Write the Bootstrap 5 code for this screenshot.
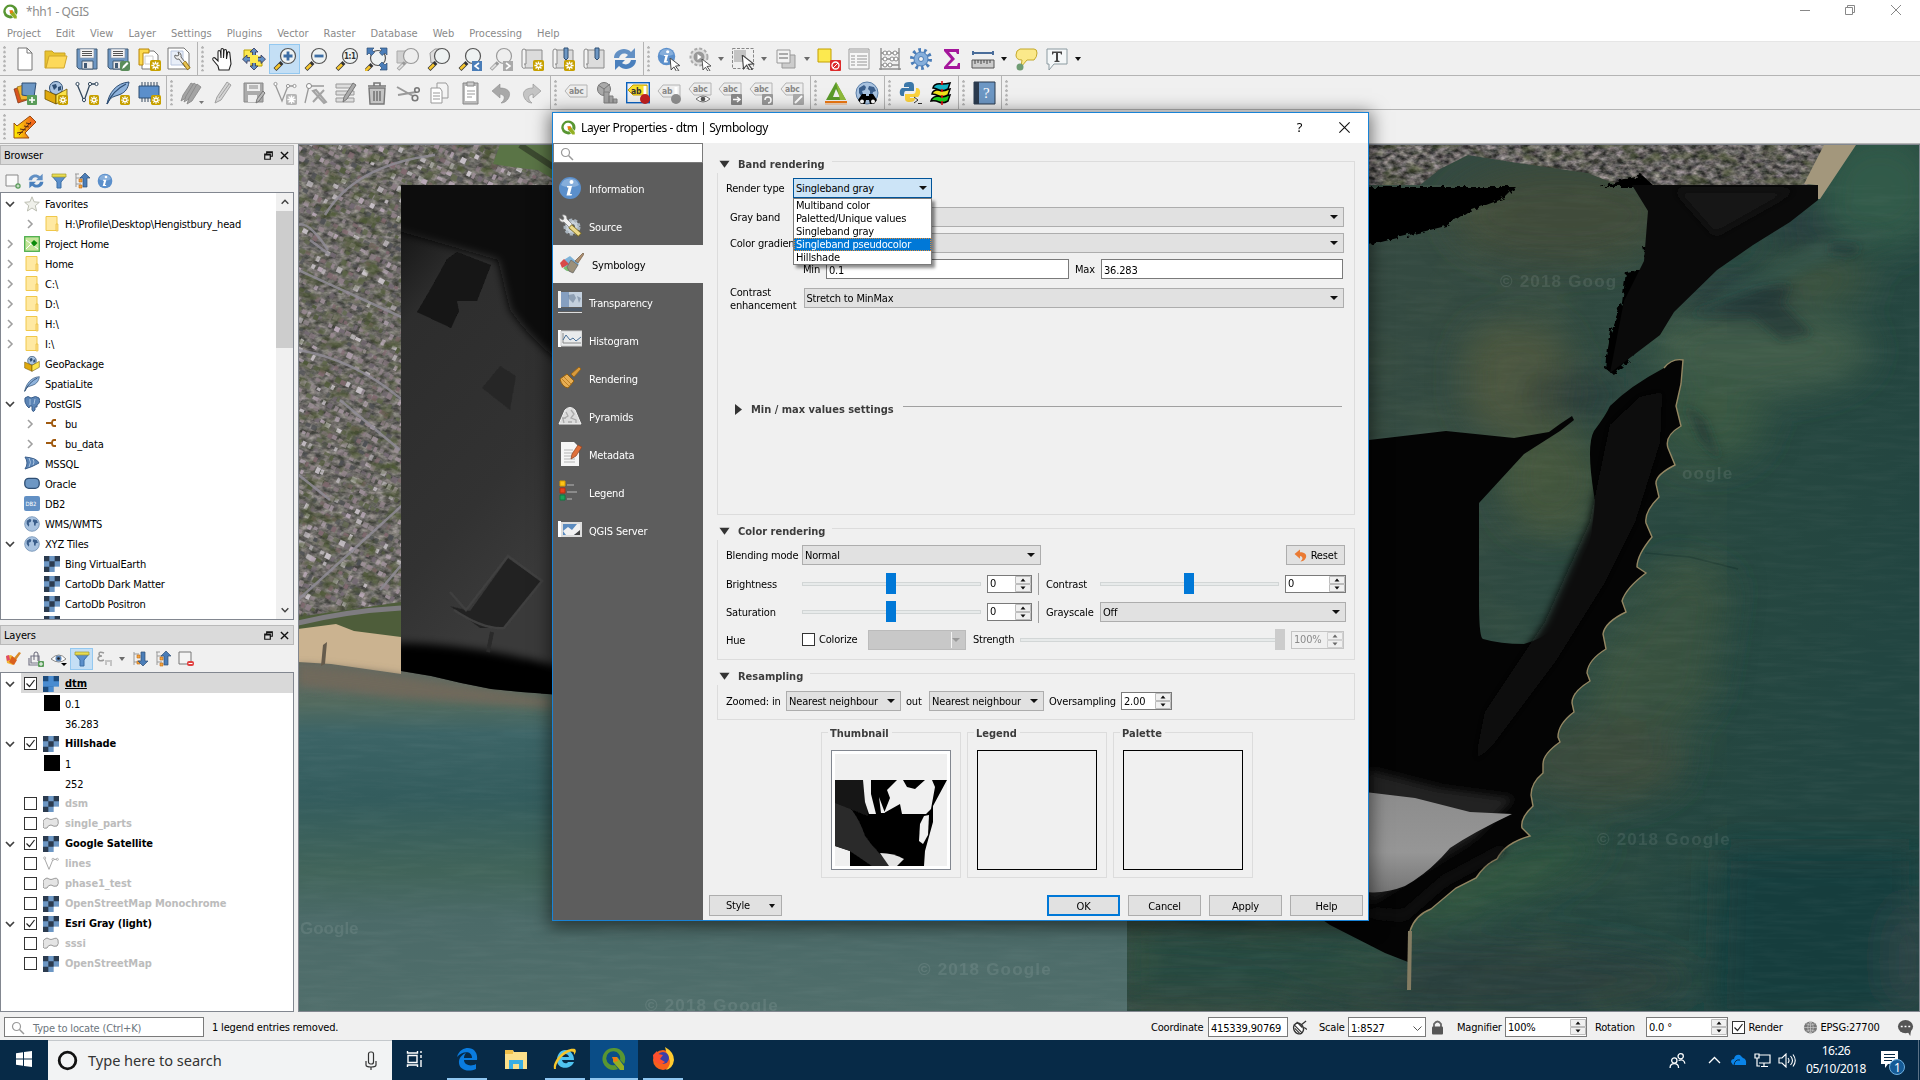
<!DOCTYPE html>
<html lang="en">
<head>
<meta charset="utf-8">
<title>*hh1 - QGIS</title>
<link rel="stylesheet" href="https://cdn.jsdelivr.net/npm/bootstrap@5.3.0/dist/css/bootstrap.min.css">
<style>
html,body{width:1920px;height:1080px;overflow:hidden}
body{font:11px/13px "DejaVu Sans Condensed","DejaVu Sans",sans-serif;font-stretch:condensed;letter-spacing:-.18px;color:#000;background:#f0f0f0;white-space:nowrap}
svg{display:block;flex:none}
.seg{font-family:"Noto Sans","Open Sans",sans-serif;font-stretch:normal;letter-spacing:-.4px}
.titlebar{height:22px;background:#fff;color:#8c8c8c;font-size:12px;padding-left:3px}
.winbtns{width:138px;margin-top:-2px}
.winbtns span{width:45.5px}
.menubar{height:20px;background:#fff;color:#8a8a8a;padding:3px 0 0 7px;gap:15px;letter-spacing:0;border-bottom:1px solid #e6e6e6}
.tbrow{height:34px;border-bottom:1px solid #b4b4b4}
.tgroup{border-right:1px solid #b4b4b4}
.grip{width:9.5px;height:26px;background:radial-gradient(circle at 1.5px 1.5px,#b4b4b4 1.1px,transparent 1.5px) 3px 0/4px 4.6px;clip-path:inset(0 2.5px 0 3px)}
.tb{width:30.9px;height:30px;display:flex;align-items:center;justify-content:center}
.tb svg{width:24px;height:24px}
.tb.lit{background:#c4dff5;border:1px solid #93c8f0}
.tarr{width:12px;display:flex;justify-content:center}
.tarr:after{content:"";border:3.5px solid transparent;border-top:4px solid #6b6b6b;border-bottom:0}
.tarr.blk:after{border-top-color:#111}
.g1{width:198px}.g2{width:446px}.r2a{width:167px}.r2b{width:384px}.r2c{width:260px}.r2d{width:74px}.r2e{width:74px}.r2f{width:43px}
.dockcol{width:298px;height:868px;padding-top:1px}
.dtitle{width:294px;height:20px;background:#dadada;border:1px solid #b9b9b9;padding:1px 4px 0 3px;gap:7px}
.dgap{margin-top:5px}
.dtools{height:27px;padding-left:1px}
.dtools span{width:23px;height:22px;display:flex;align-items:center;justify-content:center}
.dtools svg{width:16px;height:16px}
.dtools .lit{background:#c4dff5;border:1px solid #93c8f0}
.treebox{width:294px;background:#fff;border:1px solid #828790;overflow:hidden}
#browserTree{height:428px}
#browserRows{padding-top:1px}
.trow{height:20px;padding-left:3px}
.trow .chev{width:20px;flex:none}
.trow .ico{width:16px;height:16px;margin-right:5px}
.lv2{padding-left:23px}
.sbar{width:17px;background:#f0f0f0}
.sthumb{height:137px;background:#cdcdcd}
.lrow{height:20px;padding:1px 0 0 3px;font-weight:700;letter-spacing:-.08px}
.lrow.off{color:#bcbcbc}
.lrow .chev{width:16px}
.lrow .ico{width:16px;height:16px;margin:0 6px 0 6px}
.lrow.hl{background:linear-gradient(#d9d9d9,#d9d9d9) 20px 0 no-repeat}
.cbx{width:13px;height:13px;border:1px solid #333;background:#fff;display:inline-flex;align-items:center;justify-content:center;flex:none}
.cbx svg{width:11px;height:11px}
.sub{height:20px;padding:2px 0 0 43px}
.sub i{width:16px;height:16px;background:#000;margin-right:5px;margin-top:-3px}
.sub .blank{background:#fff}
.mapbox{width:1622px;height:868px;overflow:hidden;border:1px solid #828790}
.stat{height:28px;padding-top:2px}
.fld{background:#fff;border:1px solid #7a7a7a;height:20px;padding:2px 2px 0;display:flex;align-items:center;flex:none}
.cmb{background:#e1e1e1;border:1px solid #adadad;height:20px;padding:1px 5px 0 2px;display:flex;align-items:center;justify-content:space-between;flex:none}
.cmb:after{content:"";border:4px solid transparent;border-top:4.5px solid #111;border-bottom:0;margin-top:-1px}
.spn{background:#fff;border:1px solid #7a7a7a;height:18px;padding:0 0 0 2px;display:flex;align-items:center;justify-content:space-between;flex:none}
.spn svg{width:16px;height:16px}
.spn.dis{background:#f0f0f0;border-color:#c4c4c4;color:#8a8a8a}
.spn.dis svg{opacity:.6}
#locate{width:200px;margin-left:4px}
.s1,.s4,.s7,.s9,.s11,.s13{flex:none}
#statR{width:769px}.s1{width:57px}.s2{width:80px;margin-right:4px}.s3{margin-right:12px}.s4{width:29px}.s5{width:78px;margin-right:5px}.s6{margin-right:13px}.s7{width:48px}.s8{width:81.5px;height:20px}.s9{width:51px;margin-left:8.5px}.s10{margin:0 4px 0 4px}.s11{width:54px}.s12{margin-right:3px}.s13{width:76px}
.task{height:40px;background:#072a47;color:#fff}
.tkbtn{height:40px;display:flex;align-items:center;justify-content:center;flex:none;border-bottom:2px solid transparent}
.tkbtn.on{border-bottom-color:#8fc6f0}
.tkbtn svg{width:24px;height:24px}
.search{width:344px;height:40px;background:#f2f3f4;border-top:1px solid #c4c8cc;color:#333;font-size:14.6px;letter-spacing:-.03px;padding:0 14px 0 9px;gap:10px}
.t48{width:48px}.t46{width:46px}.t40{width:40px}.t58{width:58px}.qg{margin-left:5px;background:#0a4d87}.ffx{margin-left:5px}.edg{margin-left:9px}
#winlogo{width:16px;height:16px}
.tray{width:251px}.y1{margin-left:22px}.y2{margin-left:9px}.y3{margin-left:7px}.clock{width:64px;margin-left:8px;font-size:12px;line-height:18px}.y4{margin-left:12px;margin-top:4px}.peek{width:1px;height:40px;background:#5a7186;margin-left:12px}
.dlg{left:552px;top:112px;width:817px;height:809px;border:1px solid #1883d7;background:#f0f0f0;box-shadow:0 3px 16px 3px rgba(0,0,0,.5)}
.dlgtitle{height:30px;background:#fff;font-size:12px;padding:0 0 1px 8px}
.dlgtitle .me-auto{margin-left:5px}
#qm{margin-right:37px;font-size:13px}#dx{margin-right:18px}
#sfind{width:150px;margin-bottom:6px}
.side{width:150px;height:777px;background:#5d5d5d;color:#fff}
.sitem{height:38px;padding:2px 0 0 5px;gap:7px}
.sitem.sel{background:#f0f0f0;color:#000;gap:8px;padding-left:7px}
.sitem svg{width:24px;height:24px;margin-top:-2px}
.ghead{height:18px;font-weight:700;color:#3c3c3c;padding-left:2px}
.ghead,.mm,.thg b{letter-spacing:0}
.ghead:after{content:"";flex:1;align-self:flex-end;height:12px;margin-left:7px;border:solid #dcdcdc;border-width:1px 1px 0 0}
.gbody{border:solid #dcdcdc;border-width:0 1px 1px 1px;padding:5px 10px 0 8px}
.tri{width:11px;height:8px;margin-right:8px}
.pane{padding:12px 13px 0 14px;width:665px;height:777px}
.popup{left:-1px;top:19px;width:139px;height:67px;background:#fff;border:1px solid #7a7a7a;box-shadow:3px 3px 3px rgba(0,0,0,.45);z-index:3}
.popup div{height:13px;padding-left:2.5px}
.popup .pick{background:#0078d7;color:#fff;outline:1px dotted #e88b2e;outline-offset:-1px}
.sld{height:21px;position:relative;flex:none;display:flex;align-items:center}
.sld:before{content:"";width:100%;height:4px;background:#e7eaea;border:1px solid #d2d6d6}
.sld i{position:absolute;width:10px;height:21px;left:84px;background:#0078d7}
.sld.dis i{background:#ccc;left:auto;right:0}
.vline{width:1px;height:22px;background:#a0a0a0;flex:none}
.l68{width:66.5px}.l76{width:76px}.l24{width:23px}.l74{width:73.5px}.l54{width:54px;margin-left:7px}.l60{width:60px}
.l74,.l76,.l68,.l24,.l60,.l54{flex:none;padding-top:1px}
.w139{width:139px}.w540{width:540px}.w243{width:243px}.w242{width:242px}.w239{width:239px}.w179{width:179px}.w45{width:45px}.w61{width:61px}.w246{width:246px}.w265{width:265px}.w52{width:53px}.w115{width:115px}.w51{width:51px}
#gb1{height:342px}#gb2{height:120px}#gb3{height:35px;padding-top:6px}
#mmrow{padding-left:77px}#mx{width:32px;padding-left:6px}
.gh2,.gh3{margin-top:7px}
#reset{width:59px;height:20px;margin-right:-1px}
.r28{height:22px;margin-top:6px}
#gb2 .r28:nth-child(2){margin-top:7.5px}
.sp6,.vl6{margin-left:6px}
.colz{width:51px;margin-left:4px}.clr{width:98px;background:#c8c8c8;border-color:#bbb;margin-left:1px}.clr:after{border-top-color:#999}.clr span{width:82px;height:16px;border-right:1px solid #f4f4f4}.str{width:50px;margin-left:7px}
.lout{width:28px;padding-left:5px}.lovs{width:77px;padding-left:5px}
.r9{margin-top:9px}.r6{margin-top:6px}.h20{height:20px}
.ren{padding:1px 4px 0 2.5px;background:#cce4f7;border-color:#005499;position:relative}
.ind{padding-left:4px}
.mm{margin-top:92px;padding-left:9px;height:18px;font-weight:700;color:#3c3c3c;gap:9px}
.mm:after{content:"";flex:1;height:1px;background:#a0a0a0;margin:-5px 2px 0 0}
.thumbs{gap:6px;margin:12px 0 0 104px}#tn{border-color:#828790}
.thg{width:140px;height:146px;border:1px solid #dcdcdc}
.thg b{margin:-6px 0 0 6px;background:#f0f0f0;padding:0 3px 0 2px;color:#3c3c3c;display:table}
.thb{width:120px;height:120px;border:1px solid #000;margin:10px 0 0 9px}
.dbtn{width:73px;height:21px;border:1px solid #adadad;background:#e1e1e1;display:flex;align-items:center;justify-content:center;padding-top:1px}
.dbtn.def{border:2px solid #0078d7}
.foot{gap:8px;margin:17px -8px 0 -8px}#sty{padding:0 3px 0 16px}
</style>
<script src="https://cdn.jsdelivr.net/npm/bootstrap@5.3.0/dist/js/bootstrap.bundle.min.js"></script>
</head>
<body>
<svg width="0" height="0" class="position-absolute">
<defs>
<symbol id="q" viewBox="0 0 24 24"><path d="M12 1a11 11 0 1 0 4 21l-3-4a7 7 0 1 1 5-5l4 4A11 11 0 0 0 12 1z" fill="#589632"/><path d="M11 11l4-1 1 1 6 8v4h-4l-7-8z" fill="#93b023"/><path d="M10 10l5 0 1 4-4 1z" fill="#ee7913"/></symbol>
<symbol id="bnew" viewBox="0 0 12 12"><rect width="12" height="12" rx="2" fill="#c7a100"/><path d="M6 1.500v9M1.500 6h9M2.800 2.800l6.400 6.400M9.200 2.800L2.800 9.200" stroke="#fff" stroke-width="1.500"/><circle cx="6" cy="6" r="1.300" fill="#c7a100"/></symbol>
<symbol id="bgry" viewBox="0 0 12 12"><rect width="12" height="12" rx="2" fill="#b5b5b5"/><path d="M6 1.500v9M1.500 6h9M2.800 2.800l6.400 6.400M9.200 2.800L2.800 9.200" stroke="#fff" stroke-width="1.500"/></symbol>
<symbol id="page" viewBox="0 0 24 24"><path d="M5 1h9l5 5v17H5z" fill="#fff" stroke="#777"/><path d="M14 1v5h5" fill="none" stroke="#777"/></symbol>
<symbol id="open" viewBox="0 0 24 24"><path d="M1 4h7l2 2h11v4H5L2 21H1z" fill="#e8c32f" stroke="#c9a227"/><path d="M5 9h18l-3 12H2z" fill="#fdd95a" stroke="#d0a62c"/></symbol>
<symbol id="save" viewBox="0 0 24 24"><path d="M2 2h20v20H4l-2-2z" fill="#6d97c4" stroke="#415a75"/><path d="M5 2h14v9H5z" fill="#f4f4f4" stroke="#8a9aac" stroke-width=".7"/><path d="M7 4.500h10M7 6.500h10M7 8.500h10" stroke="#555"/><path d="M7 14h11v8H7z" fill="#e8e8e8" stroke="#415a75"/><path d="M9 16h3v5H9z" fill="#415a75"/></symbol>
<symbol id="saveas" viewBox="0 0 24 24"><use href="#save"/><rect x="14" y="14" width="10" height="10" rx="2" fill="#5a8c5a"/><path d="M16 22l1-3 4-4 1.500 1.500-4 4z" fill="#fff"/></symbol>
<symbol id="layout" viewBox="0 0 24 24"><path d="M5 4h12l4 4v14H5z" fill="#fff" stroke="#777"/><path d="M2 2h10v4H6v12H2z" fill="#fcd94f" stroke="#b8860b"/><path d="M8 9h8v8H8z" fill="none" stroke="#ccc"/><use href="#bnew" x="13" y="13" width="11" height="11"/></symbol>
<symbol id="mgr" viewBox="0 0 24 24"><path d="M1 1h16l5 5v16H1z" fill="#fff" stroke="#777"/><path d="M4 4h12v14H4z" fill="#e8eef8" stroke="#b9c6df"/><path d="M8 8a3 3 0 0 0 4 4l6 8 3-1-7-9a4 4 0 0 0-3-5l1 3-2 1z" fill="#eee" stroke="#555" stroke-width=".9"/><path d="M17 15l5 7" stroke="#8a6a10" stroke-width="4"/><path d="M17 15l4.500 6.500" stroke="#e8c250" stroke-width="2.600"/></symbol>
<symbol id="hand" viewBox="0 0 24 24"><path d="M8 23l-1-4-5-6c-1-2 1-3 2-2l3 3V5c0-2 2-2 2.500 0l.5 6V3c0-2 2.500-2 2.500 0v8l.5-7c0-2 2.500-2 2.500 0v8l1-6c0-2 2.500-1 2.300 0L20 17l-2 6z" fill="#fff" stroke="#222" stroke-width="1.100"/></symbol>
<symbol id="pansel" viewBox="0 0 24 24"><path d="M2 3h11v7h7v9H9v-6H2z" fill="#fce94f" stroke="#b8a000"/><path d="M12 1l4 4h-2.500v5.500H19V8l4.500 4.200L19 16.500V14h-5.500v5H16l-4 4-4-4h2.500v-5H5v2.500L.5 12.200 5 8v2.500h5.500V5H8z" fill="#6290c4" stroke="#335" stroke-width=".8"/><path d="M8 8h8v8H8z" fill="#fce94f"/></symbol>
<symbol id="mag" viewBox="0 0 24 24"><path d="M2 22.500l7-7" stroke="#333" stroke-width="4"/><path d="M2.400 22l4.600-4.500" stroke="#f6c62e" stroke-width="2.600"/><circle cx="15" cy="9" r="7.500" fill="#eef2f2" stroke="#555" stroke-width="1.200"/></symbol>
<symbol id="magg" viewBox="0 0 24 24"><path d="M2 22.500l7-7" stroke="#999" stroke-width="3.500"/><path d="M2.400 22l4.600-4.500" stroke="#ddd" stroke-width="2"/><circle cx="15" cy="9" r="7.500" fill="#eee" stroke="#9a9a9a" stroke-width="1.200"/></symbol>
<symbol id="zin" viewBox="0 0 24 24"><use href="#mag"/><path d="M15 4.500v9M10.500 9h9" stroke="#3d6ea5" stroke-width="2.800"/></symbol>
<symbol id="zout" viewBox="0 0 24 24"><use href="#mag"/><path d="M10.500 9h9" stroke="#3d6ea5" stroke-width="2.800"/></symbol>
<symbol id="z11" viewBox="0 0 24 24"><use href="#mag"/><text x="9" y="12" font-size="8" font-weight="700" letter-spacing="-.5" fill="#333">1:1</text></symbol>
<symbol id="zfull" viewBox="0 0 24 24"><use href="#mag" x="-2" y="2"/><path d="M2 1h7L7 3l2.500 2.500-3 3L4 6 2 8zM22 1v7l-2-2-3 2.500-2.500-3L17 3l-2-2zM22 23h-7l2-2-3-3 3-3 3 3 2-2z" fill="#4a7db8" stroke="#2e4e73" stroke-width=".7"/></symbol>
<symbol id="zsel" viewBox="0 0 24 24"><path d="M1 4h10v12H1z" fill="#d0d0d0" stroke="#aaa"/><use href="#magg"/></symbol>
<symbol id="zlay" viewBox="0 0 24 24"><path d="M3 6l5-4h6l-2 12-8 2z" fill="#ddd" stroke="#999"/><use href="#mag"/></symbol>
<symbol id="zlast" viewBox="0 0 24 24"><use href="#mag"/><rect x="14" y="14" width="10" height="10" fill="#4a7db8"/><path d="M21 16l-4 3 4 3" fill="none" stroke="#fff" stroke-width="1.600"/></symbol>
<symbol id="znext" viewBox="0 0 24 24"><use href="#magg"/><rect x="14" y="14" width="10" height="10" fill="#aaa"/><path d="M17 16l4 3-4 3" fill="none" stroke="#fff" stroke-width="1.600"/></symbol>
<symbol id="bk" viewBox="0 0 24 24"><path d="M5 3h17v18H5z" fill="#dcdcdc" stroke="#8a8a8a"/><path d="M5 21a2 2 0 0 1-3-2V4a2 2 0 0 1 4 0v13H4" fill="#f4f4f4" stroke="#8a8a8a"/></symbol>
<symbol id="bk1" viewBox="0 0 24 24"><use href="#bk"/><use href="#bnew" x="13" y="13" width="11" height="11"/></symbol>
<symbol id="bk3" viewBox="0 0 24 24"><use href="#bk"/><path d="M13 1h4v10l-2 2-2-2z" fill="#6d97c4" stroke="#2e4e73"/></symbol>
<symbol id="bk2" viewBox="0 0 24 24"><use href="#bk3"/><use href="#bnew" x="13" y="13" width="11" height="11"/></symbol>
<symbol id="ref" viewBox="0 0 24 24"><path d="M1 11C1 3 12-1 18 5l4-4v10H12l3-3C11 5 7 7 6 11z" fill="#6290c4"/><path d="M23 13c0 8-11 12-17 6l-4 4V13h10l-3 3c4 3 8 1 9-3z" fill="#4a80bd"/></symbol>
<symbol id="ptr" viewBox="0 0 12 12"><path d="M1 0l9 7-4 .5 3 4-2 1-2.500-4.300L2 11z" fill="#fff" stroke="#444" stroke-width=".9"/></symbol>
<symbol id="info" viewBox="0 0 24 24"><circle cx="12" cy="12" r="11" fill="#5b8fcb"/><path d="M3 9a9.500 9.500 0 0 1 18 0c-5 3-13 3-18 0z" fill="#86aedb"/><circle cx="13.500" cy="6" r="2" fill="#fff"/><path d="M9 10h5l-2 8h2l-.5 1.500H8.500l2-8H9z" fill="#fff"/></symbol>
<symbol id="ident" viewBox="0 0 24 24"><use href="#info" width="19" height="19"/><use href="#ptr" x="12" y="11" width="13" height="13"/></symbol>
<symbol id="act" viewBox="0 0 24 24"><circle cx="11" cy="10" r="8.500" fill="#ddd" stroke="#aaa" stroke-width="2" stroke-dasharray="3 2"/><circle cx="11" cy="10" r="5.500" fill="#999"/><path d="M9.500 7l4 3-4 3z" fill="#fff"/><use href="#ptr" x="13" y="12" width="12" height="12"/></symbol>
<symbol id="selr" viewBox="0 0 24 24"><path d="M1.500 1.500h21v20h-21z" fill="#f0f0f0" stroke="#888" stroke-dasharray="3 1.500"/><path d="M3 3h12v12H3z" fill="#c4c4c4"/><use href="#ptr" x="10" y="8" width="15" height="15"/></symbol>
<symbol id="dsel" viewBox="0 0 24 24"><path d="M8 8h13v13H8z" fill="#ccc" stroke="#999"/><path d="M3 3h13v13H3z" fill="#f2f2f2" stroke="#999"/><path d="M5 7h9M5 11h9" stroke="#aaa" stroke-width="2"/></symbol>
<symbol id="unsel" viewBox="0 0 24 24"><path d="M1 2h13v13H1z" fill="#fce94f" stroke="#c4a000"/><rect x="13" y="13" width="11" height="11" rx="1" fill="#dc2a2a"/><circle cx="18.500" cy="18.500" r="3.500" fill="none" stroke="#fff" stroke-width="1.300"/><path d="M16 21l5-5" stroke="#fff"/></symbol>
<symbol id="tabl" viewBox="0 0 24 24"><path d="M2 2h20v20H2z" fill="#f6f6f6" stroke="#9a9a9a"/><path d="M2 3h20v3H2z" fill="#c8c8c8"/><path d="M4 9h4M10 9h10M4 12h4M10 12h10M4 15h4M10 15h10M4 18h4M10 18h10" stroke="#b5b5b5" stroke-width="1.400"/></symbol>
<symbol id="abac" viewBox="0 0 24 24"><path d="M3 1v22M21 1v22M1 22h22M3 6h18M3 12h18M3 18h18" stroke="#8f8f8f" stroke-width="1.400"/><g fill="#fff" stroke="#888"><circle cx="7" cy="6" r="2"/><circle cx="11" cy="6" r="2"/><circle cx="17" cy="6" r="2"/><circle cx="7" cy="12" r="2"/><circle cx="14" cy="12" r="2"/><circle cx="18" cy="12" r="2"/><circle cx="7" cy="18" r="2"/><circle cx="12" cy="18" r="2"/></g></symbol>
<symbol id="gear" viewBox="0 0 24 24"><circle cx="12" cy="12" r="9" fill="none" stroke="#4a7db8" stroke-width="4" stroke-dasharray="2.600 3.050"/><circle cx="12" cy="12" r="7" fill="#85aedb" stroke="#4a7db8"/><circle cx="12" cy="12" r="2.500" fill="#f0f0f0" stroke="#4a7db8"/></symbol>
<symbol id="sig" viewBox="0 0 24 24"><path d="M4 2h15v5h-2l-1-2H9l6 7-7 7h9l1-3h2v6H4v-2l7-8-7-8z" fill="#a4169b"/></symbol>
<symbol id="meas" viewBox="0 0 24 24"><path d="M2 6h20M2 4v4M22 4v4" stroke="#4a6d9a" stroke-width="2"/><path d="M1 13h22v8H1z" fill="#ccc" stroke="#555"/><path d="M4 13v4M7 13v3M10 13v4M13 13v3M16 13v4M19 13v3" stroke="#444"/></symbol>
<symbol id="tip" viewBox="0 0 24 24"><path d="M6 2h14q3 0 3 4t-3 7h-7l-6 7 1-7q-6 0-6-5t4-6z" fill="#fbe98a" stroke="#c4a92c"/><circle cx="6" cy="20" r="3.500" fill="#6f9c74"/></symbol>
<symbol id="txt" viewBox="0 0 24 24"><path d="M2 2h20v15H9l-5 6V17H2z" fill="#f4f7f8" stroke="#8b9aa0"/><path d="M7 4.500h10v3h-1l-.6-1.500H13v7.500l1.500.5v1h-5v-1l1.500-.5V6H8.600L8 7.500H7z" fill="#444"/></symbol>
<symbol id="addl" viewBox="0 0 24 24"><path d="M1 8l8-2 5 13-9 3z" fill="#d9541e" stroke="#7a3010" stroke-width=".7"/><path d="M4 6l10-3 2 15-8 1z" fill="#f2b632" stroke="#8a6410" stroke-width=".7"/><path d="M9 2h14l-2 14-12-2z" fill="#6d97c4" stroke="#2e4e73"/><rect x="14" y="14" width="10" height="10" rx="1" fill="#5a9c5a"/><path d="M19 16v6M16 19h6" stroke="#fff" stroke-width="1.600"/></symbol>
<symbol id="gpk" viewBox="0 0 24 24"><circle cx="12" cy="7" r="6.500" fill="#a9c3e0" stroke="#2e4e73"/><path d="M8 4l4-1 1 3-3 3zM14 6l3-1v4l-3 1z" fill="#2e4e73"/><path d="M1 9l11 5v9L1 18z" fill="#e0a90c" stroke="#6b5000" stroke-width=".8"/><path d="M12 14l11-6v9l-11 6z" fill="#fbe34a" stroke="#6b5000" stroke-width=".8"/></symbol>
<symbol id="gpkn" viewBox="0 0 24 24"><use href="#gpk"/><use href="#bnew" x="14" y="14" width="10" height="10"/></symbol>
<symbol id="vl" viewBox="0 0 24 24"><path d="M2 3l7 17 6-17h7" fill="none" stroke="#34495e" stroke-width="1.300"/><g fill="#fff" stroke="#34495e"><circle cx="2.500" cy="3" r="1.600"/><circle cx="15" cy="3" r="1.600"/><circle cx="21.500" cy="3" r="1.600"/><circle cx="9" cy="19" r="1.600"/></g></symbol>
<symbol id="vln" viewBox="0 0 24 24"><use href="#vl"/><use href="#bnew" x="14" y="14" width="10" height="10"/></symbol>
<symbol id="vlg" viewBox="0 0 24 24"><path d="M2 3l7 17 6-15h7" fill="none" stroke="#999" stroke-width="1.300"/><g fill="#fff" stroke="#999"><circle cx="2.500" cy="3" r="1.600"/><circle cx="15" cy="5" r="1.600"/><circle cx="21.500" cy="5" r="1.600"/></g></symbol>
<symbol id="vlgn" viewBox="0 0 24 24"><use href="#vlg"/><use href="#bgry" x="13" y="13" width="11" height="11"/></symbol>
<symbol id="fea" viewBox="0 0 24 24"><path d="M1 23C3 12 10 2 23 1c-1 7-4 10-8 12s-8 2-11 5z" fill="#8fb3dc" stroke="#2e4e73"/><path d="M1 23C5 14 12 7 20 3" fill="none" stroke="#2e4e73" stroke-width="1.300"/></symbol>
<symbol id="fean" viewBox="0 0 24 24"><use href="#fea"/><use href="#bnew" x="14" y="14" width="10" height="10"/></symbol>
<symbol id="chip" viewBox="0 0 24 24"><path d="M5 1v20M8 1v20M11 1v20M14 1v20M17 1v20M20 1v20" stroke="#34495e"/><path d="M2 5h20v12H2z" fill="#5b8fcb" stroke="#2e4e73"/><use href="#bnew" x="14" y="14" width="10" height="10"/></symbol>
<symbol id="pcl" viewBox="0 0 24 24"><path d="M4 22l2-6L16 1l4 3L10 19z" fill="#d4d4d4" stroke="#a0a0a0"/><path d="M8 17L18 3" stroke="#a0a0a0"/></symbol>
<symbol id="pcls" viewBox="0 0 24 24"><g fill="#a4a4a4" stroke="#858585" stroke-width=".8"><path d="M1 20l2-6L11 2l4 2L6 17z"/><path d="M4 21l2-6L14 2l4 3-9 13z"/><path d="M7 23l2-6L17 3l4 3-9 14z"/></g><path d="M19 20h5l-2.500 3z" fill="#777"/></symbol>
<symbol id="saveg" viewBox="0 0 24 24"><path d="M2 2h19v19H2z" fill="#aaa" stroke="#888"/><path d="M5 3h13v7H5zM6 14h9v7H6z" fill="#eee"/><path d="M7 5h9M7 7h9" stroke="#888"/><path d="M14 22l1-4 6-8 2 2-6 8z" fill="#bbb" stroke="#777"/></symbol>
<symbol id="node" viewBox="0 0 24 24"><path d="M1 22L5 5h15" fill="none" stroke="#999" stroke-width="1.300"/><circle cx="5" cy="5" r="2.500" fill="#fff" stroke="#888"/><path d="M9 10l3-1 10 12-2 1zM20 9L9 21" stroke="#a4a4a4" stroke-width="2" fill="#ddd"/></symbol>
<symbol id="edt" viewBox="0 0 24 24"><path d="M2 3h18v4H2zM2 10h18v4H2zM2 17h18v4H2z" fill="#ddd" stroke="#999"/><path d="M9 21l1-5 9-14 3 2-9 14z" fill="#aaa" stroke="#777"/></symbol>
<symbol id="trash" viewBox="0 0 24 24"><path d="M4 7h16l-1 16H5z" fill="#c4c4c4" stroke="#777" stroke-width="1.400"/><path d="M3 5h18M9 5V2h6v3M9 10v10M12 10v10M15 10v10" fill="none" stroke="#777" stroke-width="1.600"/></symbol>
<symbol id="cut" viewBox="0 0 24 24"><path d="M1 6l16 9M2 14l18-3" stroke="#999" stroke-width="2"/><circle cx="19" cy="17" r="2.800" fill="none" stroke="#777" stroke-width="1.600"/><circle cx="21" cy="9" r="2.300" fill="none" stroke="#777" stroke-width="1.600"/></symbol>
<symbol id="copy" viewBox="0 0 24 24"><path d="M10 2h9l2 3v12H10z" fill="#f4f4f4" stroke="#999"/><path d="M4 7h9l2 3v12H4z" fill="#fff" stroke="#999"/><path d="M6 12h7M6 15h7M6 18h7" stroke="#999"/></symbol>
<symbol id="past" viewBox="0 0 24 24"><path d="M5 2h15v21H5z" fill="#bbb" stroke="#888"/><path d="M7 5h11v15H7z" fill="#fff"/><path d="M9 1h7v4H9z" fill="#ccc" stroke="#888"/><path d="M9 10h8M9 13h8M9 16h5" stroke="#999"/></symbol>
<symbol id="undo" viewBox="0 0 24 24"><path d="M3 10l8-7v4c8 0 11 4 9 9s-6 6-8 6c4-3 5-8-1-9v4z" fill="#a8a8a8" stroke="#8f8f8f" stroke-width=".6"/></symbol>
<symbol id="redo" viewBox="0 0 24 24"><path d="M21 10l-8-7v4c-8 0-11 4-9 9s6 6 8 6c-4-3-5-8 1-9v4z" fill="#c4c4c4" stroke="#8f8f8f" stroke-width=".6"/></symbol>
<symbol id="abc" viewBox="0 0 24 24"><path d="M1 10l5-6h17v12H6z" fill="#eee" stroke="#b4b4b4"/><text x="5" y="13" font-size="8.500" font-weight="700" fill="#888">abc</text></symbol>
<symbol id="dia" viewBox="0 0 24 24"><circle cx="9" cy="8" r="6.500" fill="#aaa" stroke="#777"/><path d="M9 8L3 4M9 8l6-5M9 8v6" stroke="#777"/><path d="M9 11h5v11H9zM14 15h4v7h-4zM18 18h4v4h-4z" fill="#a4a4a4" stroke="#808080"/></symbol>
<symbol id="aby" viewBox="0 0 24 24"><rect x=".7" y="1.700" width="22.600" height="20" fill="#f0f0f0" stroke="#0a62c0" stroke-width="1.400"/><path d="M2 9l5-5h14v10H7z" fill="#f9e02c" stroke="#c4a000"/><text x="5" y="12.500" font-size="8.500" font-weight="700" fill="#333">ab</text><path d="M19 5v12" stroke="#fff" stroke-width="3"/><circle cx="19" cy="18" r="5" fill="#c02020"/></symbol>
<symbol id="ab1" viewBox="0 0 24 24"><path d="M1 10l5-6h17v12H6z" fill="#eee" stroke="#b4b4b4"/><text x="5" y="13" font-size="8.500" font-weight="700" fill="#888">ab</text><path d="M19 6v12" stroke="#fff" stroke-width="3"/><circle cx="19" cy="18" r="5" fill="#8f8f8f"/></symbol>
<symbol id="ab2" viewBox="0 0 24 24"><use href="#abc" y="-2"/><path d="M8 18q7-6 14 0q-7 6-14 0z" fill="#fff" stroke="#777"/><circle cx="15" cy="18" r="2.300" fill="#555"/></symbol>
<symbol id="ab3" viewBox="0 0 24 24"><use href="#abc" y="-2"/><rect x="13" y="13" width="11" height="11" rx="1" fill="#888"/><path d="M15 18.500h7M19 16l3 2.500-3 2.500" stroke="#fff" stroke-width="1.500" fill="none"/></symbol>
<symbol id="ab4" viewBox="0 0 24 24"><use href="#abc" y="-2"/><rect x="13" y="13" width="11" height="11" rx="1" fill="#999"/><path d="M16 19a3 3 0 1 1 3 3" stroke="#fff" stroke-width="1.500" fill="none"/></symbol>
<symbol id="ab5" viewBox="0 0 24 24"><use href="#abc" y="-2"/><rect x="13" y="13" width="11" height="11" rx="1" fill="#aaa"/><path d="M15 22l7-7" stroke="#fff" stroke-width="2"/></symbol>
<symbol id="grs" viewBox="0 0 24 24"><path d="M12 1l10 18H2z" fill="#5a9a2a"/><path d="M12 8l4 8H9z" fill="#f0f0f0"/><path d="M12 1l10 18h-6z" fill="#8fba3a"/><path d="M1 21h22" stroke="#ee7913" stroke-width="2"/><path d="M1 23h22" stroke="#f2b27a"/></symbol>
<symbol id="glb" viewBox="0 0 24 24"><circle cx="12" cy="12" r="11" fill="#a9c3e0" stroke="#5b7fa8"/><path d="M4 7l5-3 2 2-1 3-3 1 1 3-1 3-3-4zM14 5l5 1 2 4-3 1-1 4-2-1v-4l-2-2z" fill="#3b5f8c"/></symbol>
<symbol id="bino" viewBox="0 0 24 24"><use href="#glb"/><path d="M7 13h4v2h3v-2h4l4 6-3 4h-4l-1-4h-3l-1 4H6l-3-4z" fill="#000"/><circle cx="7" cy="20.500" r="2" fill="#fff"/><circle cx="18" cy="20.500" r="2" fill="#fff"/></symbol>
<symbol id="py" viewBox="0 0 24 24"><path d="M11 1c5 0 5 2 5 5v4H8c-2 0-2 2-2 5H4c-3 0-3-7 0-8h7V6H6V4c0-2 2-3 5-3z" fill="#3b77a9"/><path d="M12 21c-5 0-5-2-5-5v-3h7c3 0 4-1 4-6h1c4 0 4 7 1 9h-8v1h5v1c0 2-2 3-5 3z" fill="#fbd23c"/><path d="M16 16l4 3-4 3M20 22.500h4" stroke="#333" fill="none"/></symbol>
<symbol id="stk" viewBox="0 0 24 24"><path d="M2 20q1-5 9-5 5 0 10-1l-2 6q-5 3-9 1t-8-1z" fill="#1fd01f" stroke="#000" stroke-width="1.500"/><path d="M3 13q1-5 9-4 5 0 9-1l-2 6q-5 3-9 1t-7-2z" fill="#f2e21a" stroke="#000" stroke-width="1.500"/><path d="M4 7q1-5 9-4 4 0 8-1l-2 6q-5 3-9 1t-6-2z" fill="#16b3c4" stroke="#000" stroke-width="1.500"/><path d="M13 0v4M13 8v3M13 14v3M13 20v4" stroke="#e01010" stroke-width="1.600"/></symbol>
<symbol id="hlp" viewBox="0 0 24 24"><path d="M2 1h21v22H2z" fill="#6d97c4" stroke="#2b3b4f"/><path d="M2 1h5v22H2z" fill="#2b3b4f"/><text x="11" y="17" font-size="15" font-family="Liberation Serif,serif" fill="#fff">?</text></symbol>
<symbol id="pyro" viewBox="0 0 24 24"><defs><linearGradient id="gor"><stop offset="0" stop-color="#fff200"/><stop offset=".8" stop-color="#f26a1b"/></linearGradient></defs><path d="M1 8l3 3L17 1l6 6-11 11 4 5H1z" fill="url(#gor)" stroke="#9a4a10"/><path d="M6 20L18 7M4 18l6-1M7 14l6 1M11 11l5 1M13 8l5 1" stroke="#5a2a10"/></symbol>
<symbol id="fold" viewBox="0 0 16 16"><path d="M2 .5h11v14H2z" fill="#ffe9a2" stroke="#f0c84a"/><path d="M12 8h2v7h-2z" fill="#ffe08a" stroke="#e8bb3a" stroke-width=".7"/></symbol>
<symbol id="fav" viewBox="0 0 16 16"><path d="M8 .8l2.100 5 5.200.5-4 3.400 1.300 5.300L8 12l-4.600 3 1.300-5.300-4-3.400 5.200-.5z" fill="#eff0ea" stroke="#bdbfb3"/></symbol>
<symbol id="home" viewBox="0 0 16 16"><rect x=".7" y=".7" width="14.600" height="14.600" fill="#c5e59a" stroke="#4cae4c" stroke-width="1.300"/><path d="M2 4l12 9M2 13l6-6" stroke="#fff"/><path d="M10 4l3.500 3-3.500 3.500L7 7z" fill="#0a8a0a"/></symbol>
<symbol id="pg" viewBox="0 0 16 16"><path d="M1 2q3-3 6 0q5-3 8 0q2 5-2 7v2h-2v3q-2 3-3 0v-4H6l-1 2-2-2Q0 6 1 2z" fill="#5b84b5" stroke="#3b5f8c"/><path d="M6 3v6M11 3l-1 5" stroke="#a9c3e0"/></symbol>
<symbol id="conn" viewBox="0 0 16 16"><path d="M2 7h6M12 4H10Q8 4 8 7t2 3h2" stroke="#a05a10" stroke-width="1.800" fill="none"/></symbol>
<symbol id="ms" viewBox="0 0 16 16"><path d="M1 1q12 1 14 6Q8 11 1 13q4-6 0-12z" fill="#5b84b5" stroke="#3b5f8c"/><path d="M5 2q3 4 0 9M9 3q2 3 0 6" stroke="#a9c3e0" fill="none"/></symbol>
<symbol id="ora" viewBox="0 0 16 16"><rect x=".8" y="2.300" width="14.400" height="10" rx="4" fill="#6d97c4" stroke="#2e4e73" stroke-width="1.300"/></symbol>
<symbol id="db2" viewBox="0 0 16 16"><rect width="16" height="15" rx="2" fill="#6290c4"/><text x="1.500" y="10" font-size="5.800" letter-spacing="-.1" fill="#fff">DB2</text></symbol>
<symbol id="ras" viewBox="0 0 15 15"><path d="M0 0h15v15H0z" fill="#6d97c4"/><path d="M0 0h5v5H0zM10 0h5v5h-5zM5 5h5v5H5zM0 10h5v5H0z" fill="#2b3b4f"/><path d="M10 10h5v5h-5z" fill="#fff"/></symbol>
<symbol id="rasb" viewBox="0 0 15 15"><path d="M0 0h15v15H0z" fill="#4a8cd0"/><path d="M0 0h5v5H0zM10 0h5v5h-5zM0 10h5v5H0zM5 10h5v5H5z" fill="#1c4a7a"/><path d="M5 10h5v5H5z" fill="#4a8cd0"/><path d="M10 10h5v5h-5z" fill="#d9d9d9"/></symbol>
<symbol id="poly" viewBox="0 0 16 16"><path d="M2 3q2-2 4 0 2 1 4 0 4-2 5 1 1 4-1 6-3 1-6-1-3 0-4 3-3 1-4-1 1-3 0-5 0-2 2-3z" fill="#e4e4e4" stroke="#999"/></symbol>
<symbol id="cr" viewBox="0 0 12 12"><path d="M4 2l4 4-4 4" fill="none" stroke="#a0a0a0" stroke-width="1.600"/></symbol>
<symbol id="cd" viewBox="0 0 12 12"><path d="M2 4l4 4 4-4" fill="none" stroke="#404040" stroke-width="1.700"/></symbol>
<symbol id="cu" viewBox="0 0 12 12"><path d="M2 8l4-4 4 4" fill="none" stroke="#404040" stroke-width="1.700"/></symbol>
<symbol id="ck" viewBox="0 0 11 11"><path d="M1.500 5.500l3 3 5-6.500" fill="none" stroke="#222" stroke-width="1.200"/></symbol>
<symbol id="flt" viewBox="0 0 16 16"><path d="M1 3h14l-5 6v6H6V9z" fill="#5b8fcb" stroke="#3b6ea5"/><path d="M1 1h14v3H1z" fill="#e8dc50" stroke="#a09a30" stroke-width=".7"/></symbol>
<symbol id="up" viewBox="0 0 16 16"><path d="M2 1v13M2 5h5M2 11h5M1 1h4" stroke="#999"/><path d="M5 6h3v3H5zM5 12h3v3H5z" fill="#f4a640" stroke="#c06a10" stroke-width=".6"/><path d="M11 0l5 5h-3v9H9V5H6z" fill="#4a7db8" stroke="#2e4e73" stroke-width=".7"/></symbol>
<symbol id="dn" viewBox="0 0 16 16"><path d="M2 1v13M2 3h5M2 11h5" stroke="#999"/><path d="M5 4h3v3H5zM5 10h3v3H5z" fill="#f4a640" stroke="#c06a10" stroke-width=".6"/><path d="M11 15l5-5h-3V1H9v9H6z" fill="#4a7db8" stroke="#2e4e73" stroke-width=".7"/></symbol>
<symbol id="addb" viewBox="0 0 16 16"><path d="M1 2h12v11H1z" fill="#fafafa" stroke="#888"/><circle cx="13" cy="13" r="2.700" fill="#5a9c5a"/><path d="M11.500 13h3M13 11.500v3" stroke="#fff" stroke-width=".8"/></symbol>
<symbol id="remb" viewBox="0 0 16 16"><path d="M1 1h12v12H1z" fill="#f4f4f4" stroke="#777"/><rect x="9" y="10" width="7" height="5" rx="2" fill="#e04040"/><path d="M10.500 12.500h4" stroke="#fff"/></symbol>
<symbol id="brush" viewBox="0 0 24 24"><path d="M21 1l2 2-7 8-3-3z" fill="#d99a3c" stroke="#94600f" stroke-width=".8"/><path d="M9 8l7 7-6 7q-6-1-8-9z" fill="#e7ae54" stroke="#94600f"/><path d="M6 11l7 7M4 13l7 7" stroke="#c08024"/></symbol>
<symbol id="symb" viewBox="0 0 24 24"><path d="M2 9l8-5 9 8-7 8-7-2z" fill="#7fb3d9"/><path d="M0 11l4-4 5 5-7 4z" fill="#d84a4a"/><path d="M3 16l8-4 3 8-7-1z" fill="#7cc06a"/><path d="M23 1l1 1-6 9-3-2z" fill="#b09070" stroke="#6e5a44" stroke-width=".7"/><path d="M11 8l7 5-5 8q-5-1-6-6z" fill="#9a8f7a" stroke="#666" stroke-width=".7"/></symbol>
<symbol id="styl" viewBox="0 0 16 16"><path d="M1 5l5-1 5 4-3 6-6-2z" fill="#f2b632"/><path d="M1 5l3-1 1 5-3 1z" fill="#e04a6a"/><path d="M14 1l2 1-5 7-2-2z" fill="#d88a2a"/><path d="M7 5l5 4-3 5-5-3z" fill="#d9601e"/></symbol>
<symbol id="grp" viewBox="0 0 16 16"><path d="M1 7v7h9M3 5v7h8V5z" fill="none" stroke="#778" stroke-width="1.200"/><path d="M6 9V3q0-2 2-2t2 2v7" fill="none" stroke="#667"/><rect x="10" y="10" width="6" height="6" rx="1" fill="#5a9c5a"/><path d="M13 11v4M11 13h4" stroke="#fff"/></symbol>
<symbol id="eye" viewBox="0 0 16 16"><path d="M0 8q8-8 15 0q-7 6-15 0z" fill="#fff" stroke="#888"/><circle cx="7.500" cy="7.500" r="3" fill="#5b84b5"/><circle cx="7.500" cy="7.500" r="1.300" fill="#222"/><path d="M10 12h6l-3 3z" fill="#000"/></symbol>
<symbol id="eps" viewBox="0 0 16 16"><path d="M7 2Q2 0 2 3q0 2 3 2-4 0-4 3 1 3 6 1" fill="none" stroke="#999" stroke-width="1.500"/><path d="M8 9h7v6h-2v-4h-3v3H8z" fill="#c4c4c4"/></symbol>
<symbol id="float" viewBox="0 0 10 10"><path d="M3 3V.8h6.200v5H7M.8 3.500H7v5.700H.8zM.8 4.300H7M3 1.500h6" fill="none" stroke="#111" stroke-width="1.300"/></symbol>
<symbol id="x" viewBox="0 0 10 10"><path d="M1 1l8 8M9 1L1 9" stroke="#111" stroke-width="1.500"/></symbol>
<symbol id="lens" viewBox="0 0 14 14"><circle cx="5.500" cy="5.500" r="4" fill="none" stroke="#999" stroke-width="1.200"/><path d="M8.500 8.500l4.500 4.500" stroke="#999" stroke-width="1.500"/></symbol>
<symbol id="src" viewBox="0 0 24 24"><circle cx="14" cy="13" r="7" fill="#c9d2da" stroke="#a9b4be" stroke-width="3" stroke-dasharray="3 2"/><circle cx="14" cy="13" r="3" fill="#5d5d5d"/><path d="M1 4l4 2 1-2-2-3q5-1 5 4l6 6-3 3-6-6Q2 9 1 4z" fill="#f0f0f0" stroke="#777" stroke-width=".7"/><path d="M12 12l10 9" stroke="#7a6a20" stroke-width="5"/><path d="M12.500 12.500l9 8" stroke="#ecd98a" stroke-width="3.500"/></symbol>
<symbol id="trn" viewBox="0 0 24 24"><path d="M0 1h3v19H0z" fill="#f0f0f0"/><path d="M3 2h21v15H3z" fill="#c3d0de"/><path d="M10 5l6-1 2 4-3 5-4-4zM19 6l4 2-2 5z" fill="#8e9fb3"/><path d="M3 2h8v15H3z" fill="#5c7fae" opacity=".6"/><path d="M0 18h24v3H0z" fill="#4c5a6a"/><path d="M0 22h24v1H0z" fill="#ddd"/></symbol>
<symbol id="his" viewBox="0 0 24 24"><path d="M0 2h3v17H0z" fill="#fff"/><path d="M3 3h21v15H3z" fill="#e9ebec" stroke="#ccc"/><path d="M5 15V5M5 15h18" stroke="#888"/><path d="M5 12l3-5 4 5 3-2 3 3 5-4" fill="none" stroke="#4a7098"/></symbol>
<symbol id="pyr" viewBox="0 0 24 24"><path d="M7 6q5-5 10 0l6 14H1z" fill="#dcdcdc" stroke="#f4f4f4"/><path d="M8 8l2 4-5 3 1 4M13 6l3 4-3 4 5 2v3M4 14h4M10 18h4" stroke="#aaa" stroke-width="1.300" fill="none"/></symbol>
<symbol id="met" viewBox="0 0 24 24"><path d="M3 0h13l5 5v19H3z" fill="#f6f6f6"/><path d="M6 8h9M6 11h9M6 14h8M6 17h11M6 20h11" stroke="#b4b4b4"/><path d="M13 17l1-5 6-9 4 2-6 9z" fill="#e0703a" stroke="#8a4020" stroke-width=".7"/></symbol>
<symbol id="leg" viewBox="0 0 24 24"><path d="M2 1h5v5H2z" fill="#fcc419" stroke="#d99b00"/><path d="M2 8h5v5H2z" fill="#e8401c" stroke="#b03010"/><path d="M2 15h5v5H2z" fill="#1aa05a" stroke="#0c7a40"/><path d="M9 5h7M9 12h10M9 19h5" stroke="#999" stroke-width="1.600"/></symbol>
<symbol id="srv" viewBox="0 0 24 24"><path d="M0 3h3v16H0z" fill="#fff"/><path d="M3 4h21v15H3z" fill="#ddd"/><path d="M5 6h17v11H5z" fill="#5c8cc0"/><path d="M5 13l5-4 4 3 5-6h3v7l-6 4H8z" fill="#f2f2f2"/><path d="M16 17l6-5v5z" fill="#444"/></symbol>
<symbol id="tri" viewBox="0 0 12 8"><path d="M.5.500h11L6 8z" fill="#333"/></symbol>
<symbol id="spin" viewBox="0 0 16 16"><path d="M.5.500h15v7H.5zM.5 8.500h15v7H.5z" fill="#f0f0f0" stroke="#bdbdbd"/><path d="M5.500 5.500l2.500-3 2.500 3zM5.500 10.500h5l-2.500 3z" fill="#111"/></symbol>
<symbol id="win" viewBox="0 0 16 16"><path d="M0 2.200L7 1.200v6.400H0zM8 1.100L16 0v7.600H8zM0 8.400h7v6.400L0 13.800zM8 8.400h8V16l-8-1.100z" fill="#fff"/></symbol>
<symbol id="tv" viewBox="0 0 24 24"><path d="M5 8.500h9v7H5zM4.500 4v2h10V4M4.500 20v-2h10v2M18 4v2M18 13v7M18 8v3" fill="none" stroke="#fff" stroke-width="1.400"/></symbol>
<symbol id="edge" viewBox="0 0 24 24"><path d="M2 10C4 3 9 1 13 1c6 0 10 5 9 12H9c0 5 7 7 12 4v5c-9 4-18 0-17-8 .5-4 4-7 7-8-2 2-2 4-2 5h8c0-8-10-7-15-1z" fill="#0a7ce0"/></symbol>
<symbol id="fex" viewBox="0 0 24 24"><path d="M1 3h8l1 2h13v17H1z" fill="#fce08a"/><path d="M1 3h8v4H1z" fill="#f0c04a"/><path d="M5 13h14v9h-4v-5H9v5H5z" fill="#38aee4"/></symbol>
<symbol id="ie" viewBox="0 0 24 24"><path d="M12 3c6 0 9 5 9 10H9c1 4 5 4 6 2h6c-3 8-17 8-17-2 0-6 4-10 8-10zm-3 7h7c-1-4-6-4-7 0z" fill="#4fc3f0"/><path d="M1 22C-1 14 12 0 22 2c2 2 0 5-1 6 1-6-6-3-10 0S2 18 3 22z" fill="#f5c52b"/></symbol>
<symbol id="ff" viewBox="0 0 24 24"><circle cx="12" cy="13" r="10" fill="#f7601b"/><path d="M14 0q9 5 9 13-1 8-8 10 6-6 3-12-3-5-4-11z" fill="#ffcb2f"/><circle cx="12" cy="11" r="6" fill="#3b3fa8"/><path d="M2 8l4-4 1 3 5 1-3 4 5 3q-4 4-8 1T2 8z" fill="#ff4f2e"/></symbol>
</defs>
</svg>

<div class="d-flex flex-column">
<header>
 <div class="titlebar seg d-flex align-items-center"><svg width="15" height="15"><use href="#q"/></svg><span class="ms-1 ps-1">*hh1 - QGIS</span>
  <div class="winbtns ms-auto d-flex text-center"><span><svg class="mx-auto" width="10" height="10"><path d="M0 5.500h10" stroke="#888"/></svg></span><span><svg class="mx-auto" width="10" height="10"><path d="M.5 2.500h7v7h-7zM2.500 2V.5h7v7H8" fill="none" stroke="#888"/></svg></span><span><svg class="mx-auto" width="10" height="10"><path d="M0 0l10 10M10 0L0 10" stroke="#888"/></svg></span></div>
 </div>
 <nav class="menubar d-flex align-items-center"><span>Project</span><span>Edit</span><span>View</span><span>Layer</span><span>Settings</span><span>Plugins</span><span>Vector</span><span>Raster</span><span>Database</span><span>Web</span><span>Processing</span><span>Help</span></nav>
 <div class="tbrow d-flex">
  <div class="tgroup g1 d-flex align-items-center"><i class="grip"></i><span class="tb"><svg><use href="#page"/></svg></span><span class="tb"><svg><use href="#open"/></svg></span><span class="tb"><svg><use href="#save"/></svg></span><span class="tb"><svg><use href="#saveas"/></svg></span><span class="tb"><svg><use href="#layout"/></svg></span><span class="tb"><svg><use href="#mgr"/></svg></span></div>
  <div class="tgroup g2 d-flex align-items-center"><i class="grip"></i><span class="tb"><svg><use href="#hand"/></svg></span><span class="tb"><svg><use href="#pansel"/></svg></span><span class="tb lit"><svg><use href="#zin"/></svg></span><span class="tb"><svg><use href="#zout"/></svg></span><span class="tb"><svg><use href="#z11"/></svg></span><span class="tb"><svg><use href="#zfull"/></svg></span><span class="tb"><svg><use href="#zsel"/></svg></span><span class="tb"><svg><use href="#zlay"/></svg></span><span class="tb"><svg><use href="#zlast"/></svg></span><span class="tb"><svg><use href="#znext"/></svg></span><span class="tb"><svg><use href="#bk1"/></svg></span><span class="tb"><svg><use href="#bk2"/></svg></span><span class="tb"><svg><use href="#bk3"/></svg></span><span class="tb"><svg><use href="#ref"/></svg></span></div>
  <div class="d-flex align-items-center"><i class="grip"></i><span class="tb"><svg><use href="#ident"/></svg></span><span class="tb"><svg><use href="#act"/></svg></span><i class="tarr"></i><span class="tb"><svg><use href="#selr"/></svg></span><i class="tarr"></i><span class="tb"><svg><use href="#dsel"/></svg></span><i class="tarr"></i><span class="tb"><svg><use href="#unsel"/></svg></span><span class="tb"><svg><use href="#tabl"/></svg></span><span class="tb"><svg><use href="#abac"/></svg></span><span class="tb"><svg><use href="#gear"/></svg></span><span class="tb"><svg><use href="#sig"/></svg></span><span class="tb"><svg><use href="#meas"/></svg></span><i class="tarr blk"></i><span class="tb"><svg><use href="#tip"/></svg></span><span class="tb"><svg><use href="#txt"/></svg></span><i class="tarr blk"></i></div>
 </div>
 <div class="tbrow d-flex">
  <div class="tgroup r2a d-flex align-items-center"><i class="grip"></i><span class="tb"><svg><use href="#addl"/></svg></span><span class="tb"><svg><use href="#gpkn"/></svg></span><span class="tb"><svg><use href="#vln"/></svg></span><span class="tb"><svg><use href="#fean"/></svg></span><span class="tb"><svg><use href="#chip"/></svg></span></div>
  <div class="tgroup r2b d-flex align-items-center"><i class="grip"></i><span class="tb"><svg><use href="#pcls"/></svg></span><span class="tb"><svg><use href="#pcl"/></svg></span><span class="tb"><svg><use href="#saveg"/></svg></span><span class="tb"><svg><use href="#vlgn"/></svg></span><span class="tb"><svg><use href="#node"/></svg></span><span class="tb"><svg><use href="#edt"/></svg></span><span class="tb"><svg><use href="#trash"/></svg></span><span class="tb"><svg><use href="#cut"/></svg></span><span class="tb"><svg><use href="#copy"/></svg></span><span class="tb"><svg><use href="#past"/></svg></span><span class="tb"><svg><use href="#undo"/></svg></span><span class="tb"><svg><use href="#redo"/></svg></span></div>
  <div class="tgroup r2c d-flex align-items-center"><i class="grip"></i><span class="tb"><svg><use href="#abc"/></svg></span><span class="tb"><svg><use href="#dia"/></svg></span><span class="tb"><svg><use href="#aby"/></svg></span><span class="tb"><svg><use href="#ab1"/></svg></span><span class="tb"><svg><use href="#ab2"/></svg></span><span class="tb"><svg><use href="#ab3"/></svg></span><span class="tb"><svg><use href="#ab4"/></svg></span><span class="tb"><svg><use href="#ab5"/></svg></span></div>
  <div class="tgroup r2d d-flex align-items-center"><i class="grip"></i><span class="tb"><svg><use href="#grs"/></svg></span><span class="tb"><svg><use href="#bino"/></svg></span></div>
  <div class="tgroup r2e d-flex align-items-center"><i class="grip"></i><span class="tb"><svg><use href="#py"/></svg></span><span class="tb"><svg><use href="#stk"/></svg></span></div>
  <div class="tgroup r2f d-flex align-items-center"><i class="grip"></i><span class="tb"><svg><use href="#hlp"/></svg></span></div>
  <div class="d-flex align-items-center"><i class="grip"></i></div>
 </div>
 <div class="tbrow d-flex align-items-center"><i class="grip"></i><span class="tb"><svg><use href="#pyro"/></svg></span></div>
</header>

<main class="d-flex">
 <aside class="dockcol d-flex flex-column">
  <div class="dtitle d-flex align-items-center"><span class="me-auto">Browser</span><svg width="9" height="9"><use href="#float"/></svg><svg width="9" height="9"><use href="#x"/></svg></div>
  <div class="dtools d-flex align-items-center pt-1"><span><svg><use href="#addb"/></svg></span><span><svg><use href="#ref"/></svg></span><span><svg><use href="#flt"/></svg></span><span><svg><use href="#up"/></svg></span><span><svg><use href="#info"/></svg></span></div>
  <div class="treebox d-flex" id="browserTree">
   <div class="flex-grow-1" id="browserRows">
    <div class="trow d-flex align-items-center"><span class="chev"><svg width="12" height="12"><use href="#cd"/></svg></span><svg class="ico"><use href="#fav"/></svg>Favorites</div>
    <div class="trow lv2 d-flex align-items-center"><span class="chev"><svg width="12" height="12"><use href="#cr"/></svg></span><svg class="ico"><use href="#fold"/></svg>H:\Profile\Desktop\Hengistbury_head</div>
    <div class="trow d-flex align-items-center"><span class="chev"><svg width="12" height="12"><use href="#cr"/></svg></span><svg class="ico"><use href="#home"/></svg>Project Home</div>
    <div class="trow d-flex align-items-center"><span class="chev"><svg width="12" height="12"><use href="#cr"/></svg></span><svg class="ico"><use href="#fold"/></svg>Home</div>
    <div class="trow d-flex align-items-center"><span class="chev"><svg width="12" height="12"><use href="#cr"/></svg></span><svg class="ico"><use href="#fold"/></svg>C:\</div>
    <div class="trow d-flex align-items-center"><span class="chev"><svg width="12" height="12"><use href="#cr"/></svg></span><svg class="ico"><use href="#fold"/></svg>D:\</div>
    <div class="trow d-flex align-items-center"><span class="chev"><svg width="12" height="12"><use href="#cr"/></svg></span><svg class="ico"><use href="#fold"/></svg>H:\</div>
    <div class="trow d-flex align-items-center"><span class="chev"><svg width="12" height="12"><use href="#cr"/></svg></span><svg class="ico"><use href="#fold"/></svg>I:\</div>
    <div class="trow d-flex align-items-center"><span class="chev"></span><svg class="ico"><use href="#gpk"/></svg>GeoPackage</div>
    <div class="trow d-flex align-items-center"><span class="chev"></span><svg class="ico"><use href="#fea"/></svg>SpatiaLite</div>
    <div class="trow d-flex align-items-center"><span class="chev"><svg width="12" height="12"><use href="#cd"/></svg></span><svg class="ico"><use href="#pg"/></svg>PostGIS</div>
    <div class="trow lv2 d-flex align-items-center"><span class="chev"><svg width="12" height="12"><use href="#cr"/></svg></span><svg class="ico"><use href="#conn"/></svg>bu</div>
    <div class="trow lv2 d-flex align-items-center"><span class="chev"><svg width="12" height="12"><use href="#cr"/></svg></span><svg class="ico"><use href="#conn"/></svg>bu_data</div>
    <div class="trow d-flex align-items-center"><span class="chev"></span><svg class="ico"><use href="#ms"/></svg>MSSQL</div>
    <div class="trow d-flex align-items-center"><span class="chev"></span><svg class="ico"><use href="#ora"/></svg>Oracle</div>
    <div class="trow d-flex align-items-center"><span class="chev"></span><svg class="ico"><use href="#db2"/></svg>DB2</div>
    <div class="trow d-flex align-items-center"><span class="chev"></span><svg class="ico"><use href="#glb"/></svg>WMS/WMTS</div>
    <div class="trow d-flex align-items-center"><span class="chev"><svg width="12" height="12"><use href="#cd"/></svg></span><svg class="ico"><use href="#glb"/></svg>XYZ Tiles</div>
    <div class="trow lv2 d-flex align-items-center"><span class="chev"></span><svg class="ico"><use href="#ras"/></svg>Bing VirtualEarth</div>
    <div class="trow lv2 d-flex align-items-center"><span class="chev"></span><svg class="ico"><use href="#ras"/></svg>CartoDb Dark Matter</div>
    <div class="trow lv2 d-flex align-items-center"><span class="chev"></span><svg class="ico"><use href="#ras"/></svg>CartoDb Positron</div>
    <div class="trow lv2 d-flex align-items-center"><span class="chev"></span><svg class="ico"><use href="#ras"/></svg></div>
   </div>
   <div class="sbar d-flex flex-column"><svg class="mx-auto my-1" width="10" height="10"><use href="#cu"/></svg><div class="sthumb"></div><svg class="mx-auto mt-auto mb-1" width="10" height="10"><use href="#cd"/></svg></div>
  </div>
  <div class="dtitle dgap d-flex align-items-center"><span class="me-auto">Layers</span><svg width="9" height="9"><use href="#float"/></svg><svg width="9" height="9"><use href="#x"/></svg></div>
  <div class="dtools d-flex align-items-center"><span><svg><use href="#styl"/></svg></span><span><svg><use href="#grp"/></svg></span><span><svg><use href="#eye"/></svg></span><span class="lit"><svg><use href="#flt"/></svg></span><span><svg><use href="#eps"/></svg></span><i class="tarr"></i><span><svg><use href="#dn"/></svg></span><span><svg><use href="#up"/></svg></span><span><svg><use href="#remb"/></svg></span></div>
  <div class="treebox flex-grow-1">
   <div class="lrow hl d-flex align-items-center"><span class="chev"><svg width="12" height="12"><use href="#cd"/></svg></span><span class="cbx ms-1"><svg><use href="#ck"/></svg></span><svg class="ico"><use href="#rasb"/></svg><u>dtm</u></div>
   <div class="sub d-flex align-items-center"><i></i>0.1</div>
   <div class="sub d-flex align-items-center"><i class="blank"></i>36.283</div>
   <div class="lrow d-flex align-items-center"><span class="chev"><svg width="12" height="12"><use href="#cd"/></svg></span><span class="cbx ms-1"><svg><use href="#ck"/></svg></span><svg class="ico"><use href="#ras"/></svg>Hillshade</div>
   <div class="sub d-flex align-items-center"><i></i>1</div>
   <div class="sub d-flex align-items-center"><i class="blank"></i>252</div>
   <div class="lrow off d-flex align-items-center"><span class="chev"></span><span class="cbx ms-1"></span><svg class="ico"><use href="#ras"/></svg>dsm</div>
   <div class="lrow off d-flex align-items-center"><span class="chev"></span><span class="cbx ms-1"></span><svg class="ico"><use href="#poly"/></svg>single_parts</div>
   <div class="lrow d-flex align-items-center"><span class="chev"><svg width="12" height="12"><use href="#cd"/></svg></span><span class="cbx ms-1"><svg><use href="#ck"/></svg></span><svg class="ico"><use href="#ras"/></svg>Google Satellite</div>
   <div class="lrow off d-flex align-items-center"><span class="chev"></span><span class="cbx ms-1"></span><svg class="ico"><use href="#vlg"/></svg>lines</div>
   <div class="lrow off d-flex align-items-center"><span class="chev"></span><span class="cbx ms-1"></span><svg class="ico"><use href="#poly"/></svg>phase1_test</div>
   <div class="lrow off d-flex align-items-center"><span class="chev"></span><span class="cbx ms-1"></span><svg class="ico"><use href="#ras"/></svg>OpenStreetMap Monochrome</div>
   <div class="lrow d-flex align-items-center"><span class="chev"><svg width="12" height="12"><use href="#cd"/></svg></span><span class="cbx ms-1"><svg><use href="#ck"/></svg></span><svg class="ico"><use href="#ras"/></svg>Esri Gray (light)</div>
   <div class="lrow off d-flex align-items-center"><span class="chev"></span><span class="cbx ms-1"></span><svg class="ico"><use href="#poly"/></svg>sssi</div>
   <div class="lrow off d-flex align-items-center"><span class="chev"></span><span class="cbx ms-1"></span><svg class="ico"><use href="#ras"/></svg>OpenStreetMap</div>
  </div>
 </aside>

 <div class="mapbox">
 <svg width="1620" height="868" viewBox="299 145 1620 868">
  <defs>
   <linearGradient id="seaL" x1="0" y1="0" x2="0" y2="1"><stop offset="0" stop-color="#6a675c"/><stop offset=".1" stop-color="#5d6860"/><stop offset=".17" stop-color="#526a5e"/><stop offset=".25" stop-color="#3c6466"/><stop offset=".42" stop-color="#335c5d"/><stop offset=".62" stop-color="#41645a"/><stop offset=".75" stop-color="#4b6a68"/><stop offset="1" stop-color="#506e6b"/></linearGradient>
   <linearGradient id="seaR" x1="0" y1="0" x2="1" y2=".5"><stop offset="0" stop-color="#394a42"/><stop offset=".5" stop-color="#324a41"/><stop offset=".75" stop-color="#284840"/><stop offset="1" stop-color="#224541"/></linearGradient>
   <linearGradient id="dtmG" x1="0" y1="0" x2=".35" y2="1"><stop offset="0" stop-color="#0c0c0c"/><stop offset=".1" stop-color="#191919"/><stop offset=".25" stop-color="#2d2d2d"/><stop offset=".7" stop-color="#323232"/><stop offset=".93" stop-color="#3a3a3a"/></linearGradient>
   <linearGradient id="hill" x1="0" y1="0" x2="0" y2="1"><stop offset="0" stop-color="#8c8c8c"/><stop offset=".6" stop-color="#969696"/><stop offset="1" stop-color="#757575"/></linearGradient>
   <filter id="b4" x="-20%" y="-20%" width="140%" height="140%"><feGaussianBlur stdDeviation="4"/></filter>
   <filter id="b12" x="-60%" y="-60%" width="220%" height="220%"><feGaussianBlur stdDeviation="17"/></filter>
   <filter id="b1" x="-10%" y="-10%" width="120%" height="120%"><feGaussianBlur stdDeviation=".6"/></filter>
   <filter id="rough" x="-2%" y="-2%" width="104%" height="104%"><feTurbulence type="fractalNoise" baseFrequency=".18" numOctaves="2" seed="4"/><feDisplacementMap in="SourceGraphic" scale="7"/></filter>
   <filter id="grain" x="0" y="0" width="100%" height="100%" color-interpolation-filters="sRGB"><feTurbulence type="fractalNoise" baseFrequency=".13 .2" numOctaves="3" seed="7"/><feColorMatrix values="1.500 0 0 0 -.33 1.400 .1 0 0 -.35 1.400 0 .1 0 -.35 0 0 0 0 1"/></filter>
   <filter id="trees" x="0" y="0" width="100%" height="100%" color-interpolation-filters="sRGB"><feTurbulence type="fractalNoise" baseFrequency=".05 .08" numOctaves="3" seed="11"/><feColorMatrix values="0 0 0 0 .29 0 0 0 0 .34 0 0 0 0 .18 4 0 0 0 -2.100"/></filter>
   <filter id="ripple" x="0" y="0" width="100%" height="100%" color-interpolation-filters="sRGB"><feTurbulence type="fractalNoise" baseFrequency=".02 .2" numOctaves="3" seed="3"/><feColorMatrix values="0 0 0 0 1 0 0 0 0 1 0 0 0 0 1 1 0 0 0 -.35"/></filter>
   <filter id="mottle" x="0" y="0" width="100%" height="100%" color-interpolation-filters="sRGB"><feTurbulence type="fractalNoise" baseFrequency=".012 .02" numOctaves="4" seed="9"/><feColorMatrix values="0 0 0 0 .42 0 0 0 0 .46 0 0 0 0 .3 2.200 0 0 0 -.95"/></filter>
   <clipPath id="cpL"><path d="M298 144h260v41H401v430l-103 14z"/></clipPath>
   <clipPath id="cpD"><path d="M401 185h160v510l-40-3-30-3-30-6-30-7-30-5z"/></clipPath>
   <clipPath id="cpT"><path d="M1360 144h478l-30 41h-190l-30-12-70-10-50-8-28 14-20 16h-60z"/></clipPath>
  </defs>
  <rect x="298" y="640" width="900" height="373" fill="url(#seaL)"/>
  <rect x="1127" y="144" width="793" height="869" fill="url(#seaR)"/>
  <g filter="url(#b12)">
   <rect x="1465" y="322" width="105" height="115" rx="40" fill="#4c5640"/><ellipse cx="1550" cy="480" rx="50" ry="55" fill="#43553e"/><ellipse cx="1560" cy="215" rx="110" ry="50" fill="#414b3b"/><ellipse cx="1570" cy="395" rx="45" ry="16" fill="#283938"/>
   <ellipse cx="1760" cy="350" rx="110" ry="45" fill="#3f5b48"/><ellipse cx="1740" cy="302" rx="65" ry="16" fill="#22353a"/><ellipse cx="1820" cy="280" rx="50" ry="18" fill="#43563f"/><ellipse cx="1830" cy="225" rx="60" ry="22" fill="#263b3e"/>
   <ellipse cx="1710" cy="420" rx="55" ry="45" fill="#395642"/><path d="M1670 560l60 20-20 120-90 90-70-10 60-130z" fill="#37513f"/><ellipse cx="1600" cy="760" rx="85" ry="45" fill="#3a4c3c"/><ellipse cx="1500" cy="880" rx="110" ry="24" fill="#2d5540" transform="rotate(-22 1500 880)"/><ellipse cx="1480" cy="980" rx="210" ry="38" fill="#2b403e"/><path d="M1120 930l240 10 60 30-80 20h-220z" fill="#264a3f"/>
   <path d="M1720 850h200v170h-205z" fill="#193d3e"/><ellipse cx="1880" cy="190" rx="60" ry="60" fill="#315a4a"/><ellipse cx="1910" cy="960" rx="22" ry="60" fill="#2f4546"/>
  </g>
  <path d="M298 640h829v373H298z" fill="url(#seaL)"/>
  <path d="M1610 373l60-38 60-50 80-40 60-20 20 10-90 40-70 35-80 35z" fill="#35564c" opacity=".6" filter="url(#b4)"/>
  <g filter="url(#b4)" fill="#1d3034"><path d="M1700 310l60-22 30-4-8 20 30 30-30 6-30-25-60 0zM1830 243l30 2-6 10-24-2zM1685 405l20 15 15 40-20-20z" opacity=".6"/></g>
  <path d="M1645 553l45 4 48 12" stroke="#1f3d36" stroke-width="1.500" fill="none"/>
  <rect x="1127" y="185" width="600" height="828" filter="url(#mottle)" opacity=".12"/>
  <rect x="298" y="640" width="1622" height="373" filter="url(#ripple)" opacity=".07"/>
  <rect x="1369" y="185" width="550" height="455" filter="url(#ripple)" opacity=".06"/>
  <g clip-path="url(#cpL)"><rect x="298" y="144" width="270" height="490" fill="#6d6d66"/><rect x="298" y="144" width="270" height="490" filter="url(#grain)" opacity=".4"/><g id="houses"></g>
   <rect x="298" y="144" width="270" height="490" filter="url(#trees)" opacity=".6"/>
   <path d="M298 225q10-5 30 25M325 215q30-50 110-60M310 240l20 15M298 350q60 10 110 55M298 600l110-100M340 400l60 50M298 270l110 50M330 500l-50-40M380 590l30-35" fill="none" stroke="#918d97" stroke-width="2.500" opacity=".85"/></g>
  <path d="M500 144h58v38l-20-12q-20-2-45-6z" fill="#5a7446"/><path d="M520 145l38 25" stroke="#3c4a30" stroke-width="6"/>
  <path d="M298 617l103-15v40l-103-12z" fill="#4e5d3a"/><path d="M298 623q50-12 103-15" stroke="#7e7c80" stroke-width="5" fill="none"/>
  <path d="M298 629l38-5 18 7 47 6v37l-70-10-33-2z" fill="#cbb390"/><path d="M298 665q60 4 103 11l150 22v10l-150-10-103-12z" fill="#6f695b" filter="url(#b4)"/>
  <path d="M323 645l4-3-2 22-4 2z" fill="#655b4c"/>
  <g clip-path="url(#cpD)"><path d="M401 185h160v510H401z" fill="url(#dtmG)"/>
  <g filter="url(#b4)"><path d="M395 180h170v185q-30-20-55-55l-12-50-103-30z" fill="#0b0b0b"/><path d="M395 643q76 0 170 25v38H395z" fill="#060606"/></g></g>
  <g filter="url(#b1)"><path d="M417 312l13-22 17-31 10-7 34 13-14 36-20 0 2 10-8 17z" fill="#141414"/><path d="M482 388l18-22 16 10-6 34z" fill="#272727"/><path d="M508 558l34 24-39 46-23 0-30-22 20 5z" fill="#242424"/><path d="M450 592l16 18 42-54 34 25-38 47q-20 2-50-18" fill="none" stroke="#3f3f3f" stroke-width="2.500"/><path d="M492 632l-4 20" stroke="#2a2a2a" stroke-width="4"/></g>
  <g clip-path="url(#cpT)"><rect x="1360" y="144" width="520" height="60" fill="#5a5a54"/><rect x="1360" y="144" width="520" height="60" filter="url(#grain)" opacity=".55"/><rect x="1360" y="144" width="520" height="60" filter="url(#trees)" opacity=".45"/></g>
  <path d="M1824 145h32l-36 54-4 0v-14l-12-1z" fill="#a3977c" filter="url(#b1)"/>
  <g filter="url(#rough)"><path d="M1360 187h156l-11 11-38 14-21 14-77 19z" fill="#050505"/>
   <path d="M1600 187h55v60l-12 0 5 20-22 5-4 31-12 28-3 16-2 22 9 6 20-20 40-100-10-60-22-20z" fill="#030303"/></g>
  <path d="M1632 185h186v15l-28 22-37 23-36 25-43 42-14 23-50 38 14-72 20-40 4-50z" fill="#0a0a0a"/>
  <path d="M1675 190l40 45 80-45z" fill="#141414" filter="url(#b4)"/>
  <path d="M1369 440L1446 431L1514 438L1549 432L1560 424L1572 416L1574 420L1560 431L1524 454L1479 503V601Q1479 638 1483 639Q1500 644 1524 644Q1545 638 1556 626Q1572 612 1574 601Q1580 570 1583 556Q1592 540 1592 528Q1596 500 1594 495Q1586 445 1594 431Q1606 415 1610 406Q1630 386 1664 368Q1672 358 1683 360L1681 384L1676 406L1681 426Q1664 436 1668 448L1675 465Q1655 475 1656 484L1659 497Q1644 512 1646 523L1652 537Q1637 555 1637 567L1646 573Q1626 588 1622 601L1626 612Q1605 622 1603 634L1606 649Q1588 660 1587 673L1590 681Q1572 692 1572 703L1574 712Q1558 724 1558 737L1560 742Q1543 754 1543 764V773Q1531 783 1531 795L1533 806Q1520 818 1522 828L1530 836Q1505 843 1497 859Q1485 864 1476 878L1456 888L1431 909Q1415 915 1410 931L1408 962L1385 953L1330 925L1320 918V440z" fill="#040404"/>
  <path d="M1664 368Q1672 358 1683 360L1681 384L1676 406L1681 426Q1664 436 1668 448L1675 465Q1655 475 1656 484L1659 497Q1644 512 1646 523L1652 537Q1637 555 1637 567L1646 573Q1626 588 1622 601L1626 612Q1605 622 1603 634L1606 649Q1588 660 1587 673L1590 681Q1572 692 1572 703L1574 712Q1558 724 1558 737L1560 742Q1543 754 1543 764V773Q1531 783 1531 795L1533 806Q1520 818 1522 828L1530 836Q1505 843 1497 859Q1485 864 1476 878L1456 888L1431 909Q1415 915 1410 931" fill="none" stroke="#948763" stroke-width="1.400" filter="url(#b1)"/>
  <g filter="url(#b4)"><path d="M1610 425l30-28 22-5-2 50-25 80-30 60-50 80-60 80-20 20 10-50 60-90 45-100z" fill="#111"/><path d="M1369 770l70 18 75 10-40 40-105 65z" fill="#242424"/></g>
  <g filter="url(#b1)"><path d="M1365 792l50 6 55 14 42 2q-38 18-62 34-20 24-45 38-20 8-40 6z" fill="url(#hill)"/></g><path d="M1369 913l35 3 40-35 60-32" fill="none" stroke="#1a1a1a" stroke-width="5" filter="url(#b4)"/>
  <path d="M1410 931l-1 59" stroke="#847c62" stroke-width="4"/>
  <g font-family="Liberation Sans,sans-serif" font-weight="700" font-size="17" letter-spacing="1.200" fill="#fff" opacity=".09"><text x="300" y="934" letter-spacing="0">Google</text><text x="918" y="975">© 2018 Google</text><text x="645" y="1011">© 2018 Google</text><text x="1597" y="845">© 2018 Google</text><text x="1500" y="287">© 2018 Goog</text><text x="1682" y="479">oogle</text></g>
 </svg>
 </div>
</main>

<footer>
 <div class="stat d-flex align-items-center">
  <div class="fld text-secondary" id="locate"><svg class="mx-1" width="14" height="14"><use href="#lens"/></svg><span class="ms-1">Type to locate (Ctrl+K)</span></div><span class="ms-2">1 legend entries removed.</span>
  <div class="d-flex align-items-center ms-auto" id="statR"><span class="s1">Coordinate</span><div class="fld s2">415339,90769</div><svg class="s3" width="15" height="15" viewBox="0 0 16 16"><ellipse cx="7" cy="9" rx="5" ry="6" fill="#fff" stroke="#333" stroke-width="1.500" transform="rotate(-30 7 9)"/><path d="M2 5l9 9M10 5l5-4M5 2l6 6M13 8l3 2M3 9l5 5" stroke="#333" stroke-width="1.300"/></svg><span class="s4">Scale</span><div class="fld s5 justify-content-between">1:8527<svg width="11" height="11"><path d="M1.500 3.500l4 4 4-4" fill="none" stroke="#555"/></svg></div><svg class="s6" width="13" height="15" viewBox="0 0 13 15"><path d="M3 7V4q3.500-5 7 0v3" fill="none" stroke="#666" stroke-width="1.800"/><rect x="1" y="6.500" width="11" height="8" rx="1" fill="#555"/></svg><span class="s7">Magnifier</span><div class="spn s8">100%<svg><use href="#spin"/></svg></div><span class="s9">Rotation</span><div class="spn s8">0.0 °<svg><use href="#spin"/></svg></div><span class="cbx s10"><svg><use href="#ck"/></svg></span><span class="s11">Render</span><svg class="s12" width="15" height="15" viewBox="0 0 16 16"><ellipse cx="8" cy="8" rx="7" ry="6.500" fill="#777"/><path d="M1 8h14M8 1v14M3 4q5 3 10 0M3 12q5-3 10 0M8 1q-6 7 0 14M8 1q6 7 0 14" fill="none" stroke="#ccc" stroke-width=".7"/></svg><span class="s13">EPSG:27700</span><svg width="17" height="17" viewBox="0 0 18 18"><ellipse cx="9" cy="8" rx="8" ry="7" fill="#555"/><path d="M11 13l3 5 1-7z" fill="#555"/><path d="M4 8h2M8 8h2M12 8h2" stroke="#fff" stroke-width="1.600"/></svg></div>
 </div>
 <div class="task seg d-flex">
  <div class="tkbtn t48"><svg id="winlogo"><use href="#win"/></svg></div>
  <div class="search d-flex align-items-center"><svg width="21" height="21"><circle cx="10.500" cy="10.500" r="8.300" fill="none" stroke="#111" stroke-width="2.800"/></svg><span class="me-auto">Type here to search</span><svg width="14" height="20" viewBox="0 0 14 20"><rect x="4.500" y="1" width="5" height="12" rx="2" fill="none" stroke="#333" stroke-width="1.200"/><path d="M2 10v4q0 2 5 2t5-2v-4M7 16v3" fill="none" stroke="#333" stroke-width="1.200"/></svg></div>
  <div class="tkbtn t46"><svg><use href="#tv"/></svg></div>
  <div class="tkbtn on t40 edg"><svg><use href="#edge"/></svg></div>
  <div class="tkbtn t58"><svg><use href="#fex"/></svg></div>
  <div class="tkbtn on t40"><svg><use href="#ie"/></svg></div>
  <div class="tkbtn on t48 qg"><svg><use href="#q"/></svg></div>
  <div class="tkbtn on t40 ffx"><svg><use href="#ff"/></svg></div>
  <div class="d-flex align-items-center ms-auto tray">
   <svg width="17" height="17" viewBox="0 0 16 16" fill="none" stroke="#fff" stroke-width="1.200"><circle cx="5" cy="8" r="2.500"/><path d="M1 15q0-4 4-4t4 4"/><circle cx="11" cy="4" r="2.500"/><path d="M9 8q5-2 6 3"/></svg>
   <svg class="y1" width="13" height="10" viewBox="0 0 13 10"><path d="M1 8l5.500-5.500L12 8" fill="none" stroke="#fff" stroke-width="1.300"/></svg>
   <svg class="y2" width="17" height="12" viewBox="0 0 17 12"><path d="M1 8q0-3 3-3 1-5 6-4l3 3q4 1 3 7H3z" fill="#0a84e8"/><path d="M4 11q1-6 6-5" stroke="#072a47" fill="none"/></svg>
   <svg class="y3" width="17" height="15" viewBox="0 0 17 15"><path d="M5 2h11v8H5M10 10v3M7 13.500h7M1 1h4v4H1zM3 5v8h3" fill="none" stroke="#fff" stroke-width="1.200"/></svg>
   <svg class="y3" width="18" height="15" viewBox="0 0 18 15"><path d="M1 5h3l4-4v13l-4-4H1zM10 5q2 2.500 0 5M12.500 3q4 4.500 0 9M15 1.500q4.500 6 0 12" fill="none" stroke="#fff" stroke-width="1.100"/></svg>
   <div class="clock text-center">16:26<br>05/10/2018</div>
   <svg class="y4" width="26" height="28" viewBox="0 0 26 28"><path d="M1 3h17v13H8l-3 4v-4H1z" fill="#fff"/><path d="M4 6.500h11M4 9.500h11M4 12.500h8" stroke="#072a47"/><circle cx="17" cy="19" r="7.500" fill="#145a96" stroke="#6fb0e0"/><text x="14" y="23.500" font-size="12" fill="#fff">1</text></svg>
   <i class="peek"></i>
  </div>
 </div>
</footer>
</div>

<section class="dlg position-absolute">
 <div class="dlgtitle seg d-flex align-items-center"><svg width="15" height="15"><use href="#q"/></svg><span class="me-auto">Layer Properties - dtm | Symbology</span><span id="qm">?</span><svg id="dx" width="11" height="11" viewBox="0 0 10 10"><path d="M.3.300l9.400 9.400M9.700.300L.3 9.700" stroke="#111" stroke-width="1"/></svg></div>
 <div class="d-flex">
  <div class="side"><div class="fld h20" id="sfind"><svg class="ms-1" width="14" height="14"><use href="#lens"/></svg></div>
   <div class="sitem d-flex align-items-center"><svg><use href="#info"/></svg>Information</div>
   <div class="sitem d-flex align-items-center"><svg><use href="#src"/></svg>Source</div>
   <div class="sitem sel d-flex align-items-center"><svg><use href="#symb"/></svg>Symbology</div>
   <div class="sitem d-flex align-items-center"><svg><use href="#trn"/></svg>Transparency</div>
   <div class="sitem d-flex align-items-center"><svg><use href="#his"/></svg>Histogram</div>
   <div class="sitem d-flex align-items-center"><svg><use href="#brush"/></svg>Rendering</div>
   <div class="sitem d-flex align-items-center"><svg><use href="#pyr"/></svg>Pyramids</div>
   <div class="sitem d-flex align-items-center"><svg><use href="#met"/></svg>Metadata</div>
   <div class="sitem d-flex align-items-center"><svg><use href="#leg"/></svg>Legend</div>
   <div class="sitem d-flex align-items-center"><svg><use href="#srv"/></svg>QGIS Server</div>
  </div>
  <div class="pane">
   <div class="ghead d-flex align-items-center"><svg class="tri"><use href="#tri"/></svg>Band rendering</div>
   <div class="gbody" id="gb1">
    <div class="d-flex align-items-center h20"><span class="l68">Render type</span><div class="cmb ren w139">Singleband gray<div class="popup position-absolute"><div>Multiband color</div><div>Paletted/Unique values</div><div>Singleband gray</div><div class="pick">Singleband pseudocolor</div><div>Hillshade</div></div></div></div>
    <div class="d-flex align-items-center h20 r9 ind"><span class="l74">Gray band</span><div class="cmb w540"><span></span></div></div>
    <div class="d-flex align-items-center h20 r6 ind"><span class="l74">Color gradient</span><div class="cmb w540"><span></span></div></div>
    <div class="d-flex align-items-center h20 r6" id="mmrow"><span class="l24">Min</span><div class="fld w243">0.1</div><span id="mx">Max</span><div class="fld w242">36.283</div></div>
    <div class="d-flex align-items-center h20 r9 ind"><span class="l74">Contrast<br>enhancement</span><div class="cmb w540"><span>Stretch to MinMax</span></div></div>
    <div class="mm d-flex align-items-center"><svg width="7" height="11"><path d="M0 0v11l7-5.500z" fill="#333"/></svg><span>Min / max values settings</span></div>
   </div>
   <div class="ghead d-flex align-items-center gh2"><svg class="tri"><use href="#tri"/></svg>Color rendering</div>
   <div class="gbody" id="gb2">
    <div class="d-flex align-items-center h20"><span class="l76">Blending mode</span><div class="cmb w239">Normal</div><div class="dbtn ms-auto" id="reset"><svg class="me-1" width="13" height="13" viewBox="0 0 24 24"><path d="M1 9l10-8v5c10 0 13 5 11 10s-7 7-10 7c5-4 5-9-1-10v5z" fill="#ea7a33"/></svg>Reset</div></div>
    <div class="d-flex align-items-center r28"><span class="l76">Brightness</span><div class="sld w179"><i></i></div><div class="spn w45 sp6">0<svg><use href="#spin"/></svg></div><i class="vline vl6"></i><span class="l54">Contrast</span><div class="sld w179"><i></i></div><div class="spn w61 sp6">0<svg><use href="#spin"/></svg></div></div>
    <div class="d-flex align-items-center r28"><span class="l76">Saturation</span><div class="sld w179"><i></i></div><div class="spn w45 sp6">0<svg><use href="#spin"/></svg></div><i class="vline vl6"></i><span class="l54">Grayscale</span><div class="cmb w246">Off</div></div>
    <div class="d-flex align-items-center r28"><span class="l76">Hue</span><span class="cbx"></span><span class="colz">Colorize</span><div class="cmb clr"><span></span></div><span class="str">Strength</span><div class="sld dis w265"><i></i></div><div class="spn dis w52 sp6">100%<svg><use href="#spin"/></svg></div></div>
   </div>
   <div class="ghead d-flex align-items-center gh3"><svg class="tri"><use href="#tri"/></svg>Resampling</div>
   <div class="gbody" id="gb3">
    <div class="d-flex align-items-center h20"><span class="l60">Zoomed: in</span><div class="cmb w115">Nearest neighbour</div><span class="lout">out</span><div class="cmb w115">Nearest neighbour</div><span class="lovs">Oversampling</span><div class="spn w51">2.00<svg><use href="#spin"/></svg></div></div>
   </div>
   <div class="d-flex thumbs">
    <div class="thg"><b>Thumbnail</b><div class="thb bg-white" id="tn"><svg width="118" height="118" viewBox="0 0 118 118"><path d="M3 3h112v112H3z" fill="#f0f0f0"/><g filter="url(#b1)"><path d="M3 29h112l-14 26 0 16-8 29-1 15H18V100L3 95z" fill="#060606"/><path d="M3 45q20 10 30 40 12 18 30 30H40L18 100 3 95z" fill="#2c2c2c"/><path d="M3 29h28l5 36L3 52z" fill="#151515"/></g><path d="M31 29h8l0 14 5 20h-7l-4-12zM65 29h6l4 7 8 2 10-9h7l3 7-4 22-5 5H70l-2-10-16 9 6-15-3-8 8-8zM47 46l6 16-4 0z" fill="#f0f0f0"/><path d="M97 64l-1 20-5 9-4-3 1-17 4-8z" fill="#f0f0f0"/><path d="M48 102q14 0 24 6l-7 7h-8z" fill="#e4e4e4" filter="url(#b1)"/></svg></div></div>
    <div class="thg"><b>Legend</b><div class="thb"></div></div>
    <div class="thg"><b>Palette</b><div class="thb"></div></div>
   </div>
   <div class="d-flex foot"><div class="dbtn me-auto justify-content-between" id="sty">Style<i class="tarr blk"></i></div><div class="dbtn def">OK</div><div class="dbtn">Cancel</div><div class="dbtn">Apply</div><div class="dbtn">Help</div></div>
  </div>
 </div>
</section>
<script>
/* Rows of roofs along the streets of the western suburb. */
(function(){
 var s=12345,r=function(){s=(s*1103515245+12345)%2147483648;return s/2147483648};
 var cols=['#8d7e86','#9d9098','#746a73','#b8a8b6','#80696f','#646b52','#535c3f','#96878f','#4d4f53','#ccc6cc'];
 var h='';
 for(var y=-180;y<520;y+=9){for(var x=-40;x<420;x+=6){
  if(r()<.15)continue;
  var c=cols[Math.floor(r()*cols.length)];
  h+='<rect x="'+(x+r()*2).toFixed(1)+'" y="'+(y+r()*1.5).toFixed(1)+'" width="'+(3+r()*3).toFixed(1)+'" height="'+(3+r()*3).toFixed(1)+'" fill="'+c+'" opacity="'+(.6+r()*.4).toFixed(2)+'"/>';
 }}
 var g=document.getElementById('houses');
 g.setAttribute('transform','translate(290 170) rotate(27)');
 g.innerHTML=h;
})();
</script>
</body>
</html>
